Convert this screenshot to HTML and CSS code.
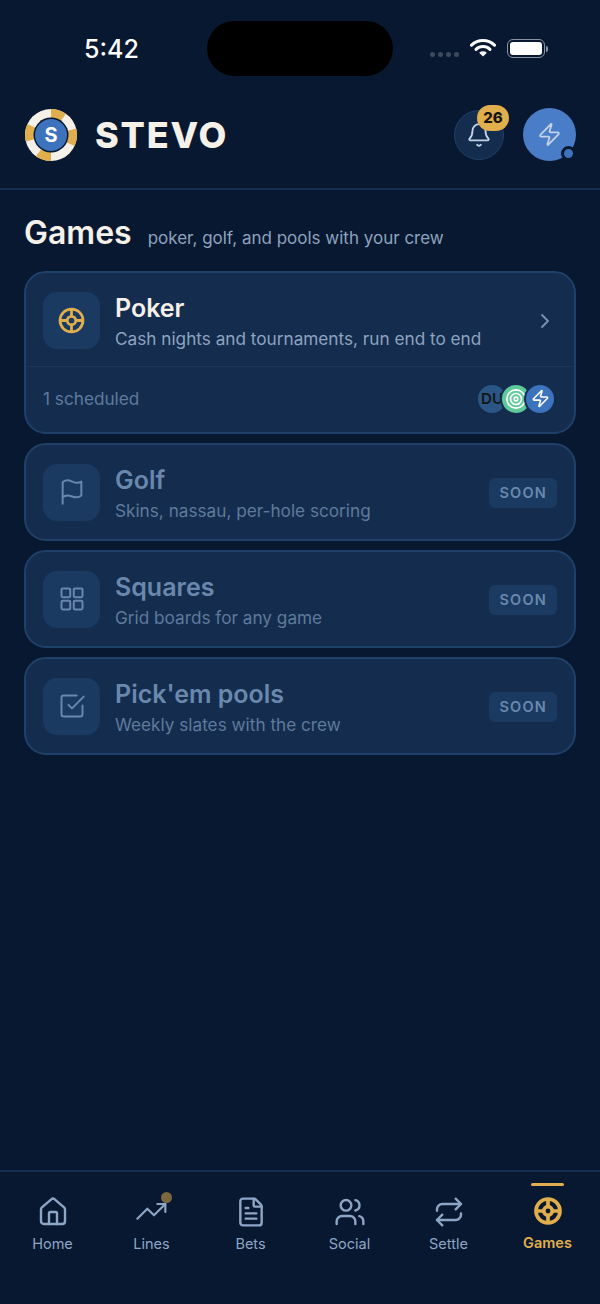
FILE: index.html
```html
<!DOCTYPE html>
<html lang="en">

<head>
  <meta charset="UTF-8">
  <meta name="viewport" content="width=device-width, initial-scale=1.0">
  <title>Stevo - Games</title>
  <link rel="stylesheet" href="styles.css">
</head>

<body>
  <div class="status-bar">
    <span class="clock">5:42</span>
    <div class="island"></div>
    <div class="status-icons">
      <div class="signal"><i></i><i></i><i></i><i></i></div>
      <svg class="wifi" width="26" height="19" viewBox="0 0 26 19">
        <path d="M1.5 7.2a16.5 16.5 0 0 1 23 0" fill="none" stroke="#fff" stroke-width="3" stroke-linecap="round"/>
        <path d="M6 11.4a10 10 0 0 1 14 0" fill="none" stroke="#fff" stroke-width="3" stroke-linecap="round"/>
        <path d="M9.2 14.8a5.6 5.6 0 0 1 7.6 0L13 18.6z" fill="#fff"/>
      </svg>
      <div class="battery"><div class="battery-fill"></div></div>
      <div class="battery-cap"></div>
    </div>
  </div>

  <header class="top-bar">
    <div class="brand">
      <svg class="brand-logo" width="52" height="52" viewBox="0 0 52 52">
        <circle cx="26" cy="26" r="26" fill="#f5f1e8"/>
        <circle cx="26" cy="26" r="21.500" fill="none" stroke="#e0ae4c" stroke-width="9" pathLength="360" stroke-dasharray="35 40 40 65" transform="rotate(-90 26 26)"/>
        <circle cx="26" cy="26" r="17.500" fill="#081830"/>
        <circle cx="26" cy="26" r="16" fill="#3d72bd"/>
        <text x="26" y="33.200" text-anchor="middle" class="brand-letter">S</text>
      </svg>
      <span class="brand-name">STEVO</span>
    </div>
    <div class="top-actions">
      <button class="bell-btn">
        <svg width="26" height="26" viewBox="0 0 24 24" fill="none" stroke="#c3d3e6" stroke-width="1.7" stroke-linecap="round" stroke-linejoin="round">
          <path d="M10.3 21a2 2 0 0 0 3.4 0"/>
          <path d="M3.3 15.3A1 1 0 0 0 4 17h16a1 1 0 0 0 .7-1.7C19.400 14 18 12.500 18 8A6 6 0 0 0 6 8c0 4.500-1.400 6-2.700 7.300"/>
        </svg>
        <span class="bell-count">26</span>
      </button>
      <div class="avatar">
        <svg width="25" height="25" viewBox="0 0 24 24" fill="none" stroke="#c3d3e6" stroke-width="1.7" stroke-linecap="round" stroke-linejoin="round">
          <path d="M4 14a1 1 0 0 1-.8-1.600l9.900-10.200a.5.500 0 0 1 .9.500l-1.900 6A1 1 0 0 0 13 10h7a1 1 0 0 1 .8 1.600l-9.900 10.200a.5.500 0 0 1-.9-.500l1.900-6A1 1 0 0 0 11 14z"/>
        </svg>
        <span class="avatar-dot"></span>
      </div>
    </div>
  </header>

  <main class="content">
    <div class="page-title">
      <h1>Games</h1>
      <span>poker, golf, and pools with your crew</span>
    </div>

    <section class="card">
      <div class="card-row">
        <div class="card-icon">
          <svg width="29" height="29" viewBox="0 0 24 24" fill="none" stroke="#e0ae4c" stroke-width="2.300">
            <circle cx="12" cy="12" r="9.500"/>
            <circle cx="12" cy="12" r="3.500"/>
            <path d="M12 2.500v6M12 15.500v6M2.500 12h6M15.500 12h6"/>
          </svg>
        </div>
        <div class="card-text">
          <h2>Poker</h2>
          <p>Cash nights and tournaments, run end to end</p>
        </div>
        <svg class="chevron" width="20" height="20" viewBox="0 0 20 20" fill="none" stroke="#7d93b2" stroke-width="1.800" stroke-linecap="round" stroke-linejoin="round">
          <path d="M7 4l6 6-6 6"/>
        </svg>
      </div>
      <div class="card-foot">
        <span>1 scheduled</span>
        <div class="stack">
          <div class="stack-item stack-du">DU</div>
          <div class="stack-item stack-green">
            <svg width="22" height="22" viewBox="0 0 24 24" fill="none" stroke="#fff" stroke-width="1.800">
              <circle cx="12" cy="12" r="10"/>
              <circle cx="12" cy="12" r="6"/>
              <circle cx="12" cy="12" r="2"/>
            </svg>
          </div>
          <div class="stack-item stack-blue">
            <svg width="19" height="19" viewBox="0 0 24 24" fill="none" stroke="#fff" stroke-width="2" stroke-linecap="round" stroke-linejoin="round">
              <path d="M4 14a1 1 0 0 1-.8-1.600l9.900-10.200a.5.500 0 0 1 .9.500l-1.900 6A1 1 0 0 0 13 10h7a1 1 0 0 1 .8 1.600l-9.900 10.200a.5.500 0 0 1-.9-.500l1.900-6A1 1 0 0 0 11 14z"/>
            </svg>
          </div>
        </div>
      </div>
    </section>

    <section class="card card-soon">
      <div class="card-row">
        <div class="card-icon">
          <svg width="28" height="28" viewBox="0 0 24 24" fill="none" stroke="#6a88ad" stroke-width="1.700" stroke-linecap="round" stroke-linejoin="round">
            <path d="M4 22V4a1 1 0 0 1 .4-.8A6 6 0 0 1 8 2c3 0 5 2 7.300 2A6 6 0 0 0 20 3v12a6 6 0 0 1-4.700 1.500C13 16.500 11 15 8 15a6 6 0 0 0-4 1.500"/>
          </svg>
        </div>
        <div class="card-text">
          <h2>Golf</h2>
          <p>Skins, nassau, per-hole scoring</p>
        </div>
        <span class="soon">SOON</span>
      </div>
    </section>

    <section class="card card-soon">
      <div class="card-row">
        <div class="card-icon">
          <svg width="28" height="28" viewBox="0 0 24 24" fill="none" stroke="#6a88ad" stroke-width="1.700" stroke-linejoin="round">
            <rect x="3" y="3" width="7.500" height="7.500" rx="1"/>
            <rect x="13.500" y="3" width="7.500" height="7.500" rx="1"/>
            <rect x="3" y="13.500" width="7.500" height="7.500" rx="1"/>
            <rect x="13.500" y="13.500" width="7.500" height="7.500" rx="1"/>
          </svg>
        </div>
        <div class="card-text">
          <h2>Squares</h2>
          <p>Grid boards for any game</p>
        </div>
        <span class="soon">SOON</span>
      </div>
    </section>

    <section class="card card-soon">
      <div class="card-row">
        <div class="card-icon">
          <svg width="28" height="28" viewBox="0 0 24 24" fill="none" stroke="#6a88ad" stroke-width="1.700" stroke-linecap="round" stroke-linejoin="round">
            <path d="M21 11.500V19a2 2 0 0 1-2 2H5a2 2 0 0 1-2-2V5a2 2 0 0 1 2-2h11"/>
            <path d="M9 11l3 3L22 4"/>
          </svg>
        </div>
        <div class="card-text">
          <h2>Pick'em pools</h2>
          <p>Weekly slates with the crew</p>
        </div>
        <span class="soon">SOON</span>
      </div>
    </section>
  </main>

  <nav class="tabs">
    <a class="tab">
      <svg width="32" height="32" viewBox="0 0 24 24" fill="none" stroke="#8ea6c6" stroke-width="1.800" stroke-linecap="round" stroke-linejoin="round">
        <path d="M15 21v-8a1 1 0 0 0-1-1h-4a1 1 0 0 0-1 1v8"/>
        <path d="M3 10a2 2 0 0 1 .7-1.500l7-6a2 2 0 0 1 2.600 0l7 6A2 2 0 0 1 21 10v9a2 2 0 0 1-2 2H5a2 2 0 0 1-2-2z"/>
      </svg>
      <span>Home</span>
    </a>
    <a class="tab">
      <svg width="36" height="32" viewBox="0 0 24 24" fill="none" stroke="#8ea6c6" stroke-width="1.600" stroke-linecap="round" stroke-linejoin="round">
        <path d="M22 6l-8.500 8.500-5-5L1 17"/>
        <path d="M16 6h6v6"/>
      </svg>
      <i class="tab-dot"></i>
      <span>Lines</span>
    </a>
    <a class="tab">
      <svg width="32" height="32" viewBox="0 0 24 24" fill="none" stroke="#8ea6c6" stroke-width="1.800" stroke-linecap="round" stroke-linejoin="round">
        <path d="M6 22a2 2 0 0 1-2-2V4a2 2 0 0 1 2-2h8a2.400 2.400 0 0 1 1.700.7l3.600 3.600A2.400 2.400 0 0 1 20 8v12a2 2 0 0 1-2 2z"/>
        <path d="M14 2v5a1 1 0 0 0 1 1h5"/>
        <path d="M10 9H8M16 13H8M16 17H8"/>
      </svg>
      <span>Bets</span>
    </a>
    <a class="tab">
      <svg width="32" height="32" viewBox="0 0 24 24" fill="none" stroke="#8ea6c6" stroke-width="1.800" stroke-linecap="round" stroke-linejoin="round">
        <path d="M16 21v-2a4 4 0 0 0-4-4H6a4 4 0 0 0-4 4v2"/>
        <circle cx="9" cy="7" r="4"/>
        <path d="M22 21v-2a4 4 0 0 0-3-3.900"/>
        <path d="M16 3.100a4 4 0 0 1 0 7.800"/>
      </svg>
      <span>Social</span>
    </a>
    <a class="tab">
      <svg width="32" height="32" viewBox="0 0 24 24" fill="none" stroke="#8ea6c6" stroke-width="1.800" stroke-linecap="round" stroke-linejoin="round">
        <path d="M17 2l4 4-4 4"/>
        <path d="M3 11v-1a4 4 0 0 1 4-4h14"/>
        <path d="M7 22l-4-4 4-4"/>
        <path d="M21 13v1a4 4 0 0 1-4 4H3"/>
      </svg>
      <span>Settle</span>
    </a>
    <a class="tab tab-active">
      <i class="tab-line"></i>
      <svg width="32" height="32" viewBox="0 0 24 24" fill="none" stroke="#e0ae4c" stroke-width="2.800">
        <circle cx="12" cy="12" r="9"/>
        <circle cx="12" cy="12" r="3.200"/>
        <path d="M12 3v6M12 15v6M3 12h6M15 12h6"/>
      </svg>
      <span>Games</span>
    </a>
  </nav>
</body>

</html>
```

FILE: styles.css
```css
html {
  background-color: #081830;
}

body {
  margin: 0;
  height: 1304px;
  display: flex;
  flex-direction: column;
  font-family: Inter, "Liberation Sans", sans-serif;
  color: #f5f1e8;
}

/* status bar */
.status-bar {
  display: flex;
  align-items: center;
  height: 55px;
  padding: 21px 0 19px 84px;
}

.clock {
  width: 123px;
  font-size: 25px;
  font-weight: 500;
  color: #fff;
}

.island {
  width: 186px;
  height: 55px;
  border-radius: 28px;
  background: #000;
}

.status-icons {
  display: flex;
  align-items: center;
  margin-left: 37px;
}

.signal {
  display: flex;
  gap: 3px;
  margin-top: 12px;
  margin-right: 11px;
}

.signal i {
  width: 5px;
  height: 5px;
  border-radius: 50%;
  background: #3e4a5c;
}

.wifi {
  margin-right: 11px;
  margin-top: -3px;
}

.battery {
  box-sizing: border-box;
  width: 38px;
  height: 19px;
  padding: 2px;
  border: 1.500px solid #8a93a1;
  border-radius: 6px;
}

.battery-fill {
  height: 100%;
  border-radius: 3px;
  background: #fff;
}

.battery-cap {
  width: 2px;
  height: 6px;
  margin-left: 1px;
  border-radius: 0 2px 2px 0;
  background: #8a93a1;
}

/* header */
.top-bar {
  display: flex;
  align-items: center;
  justify-content: space-between;
  height: 95px;
  padding: 0 24px 14px 25px;
  border-bottom: 2px solid #152f50;
  box-sizing: border-box;
}

.brand {
  display: flex;
  align-items: center;
  gap: 18px;
}

.brand-letter {
  font-size: 20px;
  font-weight: 700;
  fill: #fff;
}

.brand-name {
  font-size: 36px;
  font-weight: 800;
  letter-spacing: 1.800px;
}

.top-actions {
  display: flex;
  align-items: center;
  gap: 19px;
}

.bell-btn {
  position: relative;
  box-sizing: border-box;
  display: flex;
  align-items: center;
  justify-content: center;
  width: 50px;
  height: 50px;
  padding: 0;
  border: 1.500px solid #1f4068;
  border-radius: 50%;
  background: #142c4e;
}

.bell-count {
  position: absolute;
  top: -6px;
  right: -6px;
  width: 32px;
  height: 26px;
  border-radius: 13px;
  background: #e0ae4c;
  color: #141414;
  font-family: Inter, sans-serif;
  font-size: 15px;
  font-weight: 800;
  line-height: 26px;
  text-align: center;
}

.avatar {
  position: relative;
  display: flex;
  align-items: center;
  justify-content: center;
  width: 53px;
  height: 53px;
  border-radius: 50%;
  background: #4a7dc8;
}

.avatar-dot {
  position: absolute;
  right: 0;
  bottom: 0;
  box-sizing: border-box;
  width: 15px;
  height: 15px;
  border: 3px solid #081830;
  border-radius: 50%;
  background: #3d72bd;
}

/* content */
.content {
  flex: 1;
  display: flex;
  flex-direction: column;
  gap: 9px;
  padding: 0 24px;
}

.page-title {
  display: flex;
  align-items: baseline;
  gap: 16px;
  height: 72px;
  padding-top: 24px;
  box-sizing: border-box;
}

.page-title h1 {
  margin: 0;
  font-size: 32px;
  font-weight: 600;
  line-height: 38px;
}

.page-title span {
  font-size: 17px;
  color: #8ea3bf;
}

.card {
  border: 2px solid #1f4068;
  border-radius: 22px;
  background: #142c4e;
}

.card-row {
  display: flex;
  align-items: center;
  gap: 15px;
  box-sizing: border-box;
  height: 93px;
  padding: 2px 17px 0;
}

.card-icon {
  display: flex;
  align-items: center;
  justify-content: center;
  flex: none;
  width: 57px;
  height: 57px;
  border-radius: 14px;
  background: #1a3a62;
}

.card-text {
  flex: 1;
  padding-top: 2px;
}

.card-text h2 {
  margin: 0 0 5px;
  font-size: 25px;
  font-weight: 600;
  line-height: 30px;
}

.card-text p {
  margin: 0;
  font-size: 17.200px;
  line-height: 22px;
  color: #8ea3bf;
}

.chevron {
  margin-right: 2px;
}

.card-foot {
  display: flex;
  align-items: center;
  justify-content: space-between;
  box-sizing: border-box;
  height: 66px;
  padding: 0 18px 2px 17px;
  border-top: 1px solid #1a3558;
  font-size: 17.200px;
  color: #5f7a9c;
}

.stack {
  display: flex;
}

.stack-item {
  display: flex;
  align-items: center;
  justify-content: center;
  width: 28px;
  height: 28px;
  margin-left: -8px;
  border: 2px solid #142c4e;
  border-radius: 50%;
}

.stack-du {
  background: #2a5585;
  color: #141414;
  font-size: 15px;
  font-weight: 600;
}

.stack-green {
  background: #5fc99a;
}

.stack-blue {
  background: #3d72bd;
}

.card-soon .card-row {
  height: 94px;
  padding-top: 0;
}

.card-soon h2 {
  color: #6a88ad;
}

.card-soon p {
  color: #5f7a9c;
}

.soon {
  margin-top: 1px;
  padding: 0 10px;
  height: 30px;
  line-height: 30px;
  border-radius: 6px;
  background: #1a3a62;
  color: #6a88ad;
  font-size: 14.500px;
  font-weight: 600;
  letter-spacing: 1.200px;
}

/* bottom tabs */
.tabs {
  display: flex;
  height: 134px;
  box-sizing: border-box;
  padding: 24px 3px 0;
  border-top: 2px solid #152f50;
}

.tab {
  position: relative;
  flex: 1;
  display: flex;
  flex-direction: column;
  align-items: center;
  gap: 7px;
  height: 64px;
  font-size: 14.500px;
  color: #8ea6c6;
}

.tab-dot {
  position: absolute;
  top: -4px;
  left: 59px;
  width: 11px;
  height: 11px;
  border-radius: 50%;
  background: #7d6740;
}

.tab-line {
  position: absolute;
  top: -13px;
  width: 33px;
  height: 3px;
  border-radius: 2px;
  background: #e0ae4c;
}

.tab-active {
  color: #e0ae4c;
  font-weight: 600;
}

.tab-active svg {
  margin-top: -1px;
}
```
